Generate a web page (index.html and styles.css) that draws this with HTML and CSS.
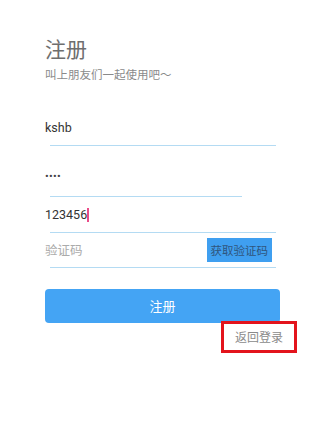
FILE: index.html
```html
<!DOCTYPE html>
<html lang="zh">
<head>
<meta charset="utf-8">
<link rel="stylesheet" href="styles.css">
</head>
<body>
<div class="page">
  <h1 class="title">注册</h1>
  <p class="subtitle">叫上朋友们一起使用吧～</p>

  <div class="field f1">
    <div class="value">kshb</div>
    <div class="line"></div>
  </div>

  <div class="field f2">
    <div class="value dots">••••</div>
    <div class="line short"></div>
  </div>

  <div class="field f3">
    <div class="value">123456<span class="cursor"></span></div>
    <div class="line"></div>
  </div>

  <div class="field f4">
    <div class="code-row">
      <span class="placeholder">验证码</span>
      <span class="code-btn">获取验证码</span>
    </div>
    <div class="line"></div>
  </div>

  <div class="submit">注册</div>
  <div class="back"><span class="back-link">返回登录</span></div>
</div>
</body>
</html>
```

FILE: styles.css
```css
html, body {
  margin: 0;
  padding: 0;
  background: #ffffff;
}
body {
  font-family: Roboto, "Noto Sans CJK SC", sans-serif;
}
.page {
  width: 329px;
  height: 422px;
  box-sizing: border-box;
  padding: 38px 0 0 45px;
  position: relative;
}
.title {
  margin: 0;
  font-size: 21px;
  line-height: 24px;
  font-weight: 400;
  color: #6e6e6e;
}
.subtitle {
  margin: 5px 0 0 0;
  font-size: 11.5px;
  line-height: 16px;
  color: #8a8a8a;
}
.field .value {
  font-size: 12.5px;
  line-height: 20px;
  height: 20px;
  color: #333333;
  display: flex;
  align-items: center;
}
.field .line {
  margin-left: 5px;
  width: 226px;
  height: 1px;
  background: #b4dbf3;
}
.field .line.short {
  width: 192px;
}
.f1 { margin-top: 35px; }
.f1 .value { margin-bottom: 6.5px; }
.f2 { margin-top: 23px; }
.f2 .value { margin-bottom: 7px; }
.dots {
  font-size: 11px !important;
  letter-spacing: 0.3px;
  padding-bottom: 4px;
  box-sizing: border-box;
  color: #444444 !important;
}
.f3 { margin-top: 8.5px; }
.f3 .value { margin-bottom: 6.5px; }
.cursor {
  display: inline-block;
  width: 2px;
  height: 14px;
  background: #ea4c89;
}
.f4 { margin-top: 5px; }
.code-row {
  width: 227px;
  height: 24px;
  display: flex;
  align-items: center;
  justify-content: space-between;
  margin-bottom: 5px;
}
.placeholder {
  font-size: 12.5px;
  color: #ababab;
}
.code-btn {
  height: 24px;
  padding: 0 4px;
  display: flex;
  align-items: center;
  background: #3f9ff0;
  color: #2f557c;
  font-size: 11.5px;
}
.submit {
  margin-top: 21px;
  width: 235px;
  height: 34px;
  border-radius: 4px;
  background: #44a4f4;
  color: #ffffff;
  font-size: 13px;
  display: flex;
  align-items: center;
  justify-content: center;
}
.back {
  display: flex;
  margin-top: -2px;
  padding-left: 176px;
}
.back-link {
  width: 76px;
  height: 32px;
  box-sizing: border-box;
  border: 3px solid #e3141c;
  display: flex;
  align-items: center;
  justify-content: center;
  font-size: 12px;
  color: #8a8a8a;
}
```
